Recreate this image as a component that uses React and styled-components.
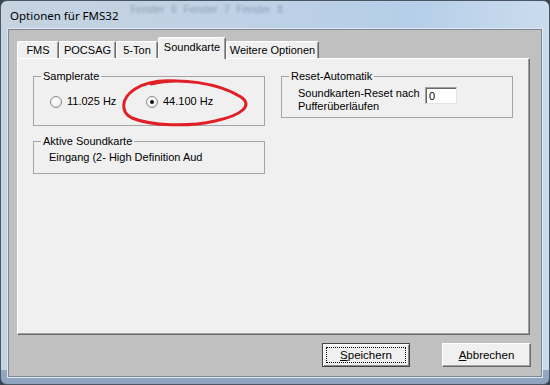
import React from 'react';
import styled, {createGlobalStyle} from 'styled-components';

const GlobalStyle = createGlobalStyle`
  html, body {
    margin: 0;
    padding: 0;
    background: #39434f;
  }
  body {
    font-family: 'Liberation Sans', Arial, sans-serif;
    font-size: 11px;
    color: #000;
  }
`;

const Window = styled.div`
  position: relative;
  width: 550px;
  height: 385px;
  box-sizing: border-box;
  border: 1px solid #4b5664;
  border-radius: 7px;
  padding: 0 7px 7px 7px;
  display: flex;
  flex-direction: column;
  background:
    linear-gradient(to bottom, rgba(0,0,0,0) 369px, #93a8c2 369px, #8ea4bf 100%),
    linear-gradient(to right, #c6d3e0 0%, #bed1e6 45%, #b6cee9 75%, #cadcee 100%);
  overflow: hidden;
`;

const TitleBar = styled.div`
  height: 28px;
  display: flex;
  align-items: center;
  padding-left: 2px;
  font-family: 'Noto Sans', 'Open Sans', sans-serif;
  font-size: 11.5px;
  color: #000;
`;

const GhostText = styled.span`
  margin-left: 12px;
  margin-bottom: 12px;
  font-family: 'Liberation Sans', sans-serif;
  font-size: 10px;
  color: rgba(80, 100, 125, 0.45);
  filter: blur(1px);
  word-spacing: 4px;
`;

const Client = styled.div`
  flex: 1;
  display: flex;
  flex-direction: column;
  background: #c0c0c0;
  border: 1px solid #7d8896;
  box-shadow: 0 0 0 1px #dfe6ee;
  padding: 7px 11px 9px 8px;
`;

const TabRow = styled.div`
  display: flex;
  align-items: flex-end;
  height: 21px;
  position: relative;
  z-index: 1;
`;

const Tab = styled.div`
  box-sizing: border-box;
  width: ${p => p.$w}px;
  height: ${p => (p.$active ? 22 : 17)}px;
  margin-bottom: ${p => (p.$active ? -1 : 0)}px;
  background: #f0f0f0;
  border-top: 1px solid #fff;
  border-left: 1px solid #fff;
  border-right: 1px solid #696969;
  box-shadow: inset -1px 0 0 #a0a0a0;
  border-radius: 2px 2px 0 0;
  display: flex;
  justify-content: center;
  padding-top: ${p => (p.$active ? 3 : 2)}px;
  line-height: 13px;
`;

const Panel = styled.div`
  flex: 1;
  box-sizing: border-box;
  background: #f0f0f0;
  border-top: 1px solid #fff;
  border-left: 1px solid #fff;
  border-right: 1px solid #696969;
  border-bottom: 1px solid #696969;
  box-shadow: inset -1px -1px 0 #a0a0a0;
  padding: 17px 0 0 15px;
  display: grid;
  grid-template-columns: 232px 232px;
  column-gap: 16px;
  align-content: start;
`;

const Column = styled.div`
  display: flex;
  flex-direction: column;
  gap: 15px;
`;

const GroupBox = styled.div`
  position: relative;
  box-sizing: border-box;
  height: ${p => p.$h}px;
  border: 1px solid #a5a5a5;
  padding: ${p => p.$pad};
  line-height: 13px;
`;

const Caption = styled.span`
  position: absolute;
  top: -7px;
  left: 7px;
  padding: 0 2px;
  background: #f0f0f0;
  line-height: 13px;
`;

const RadioRow = styled.div`
  display: flex;
`;

const RadioItem = styled.label`
  width: 96px;
  display: flex;
  align-items: center;
  gap: 5px;
`;

const RadioDot = styled.span`
  box-sizing: border-box;
  width: 12px;
  height: 12px;
  border-radius: 50%;
  border: 1px solid #8b8b8b;
  background: radial-gradient(circle at 40% 35%, #ffffff 0%, #f4f4f4 50%, #d6d6d6 100%);
  display: flex;
  align-items: center;
  justify-content: center;
  &::after {
    content: '';
    width: 4px;
    height: 4px;
    border-radius: 50%;
    background: ${p => (p.$checked ? '#111' : 'transparent')};
  }
`;

const ResetLine = styled.div`
  display: flex;
  align-items: flex-start;
`;

const ResetLabel = styled.div`
  width: 127px;
  white-space: nowrap;
`;

const NumberBox = styled.div`
  box-sizing: border-box;
  width: 32px;
  height: 17px;
  background: #fff;
  border-top: 1px solid #a0a0a0;
  border-left: 1px solid #a0a0a0;
  border-right: 1px solid #e3e3e3;
  border-bottom: 1px solid #e3e3e3;
  box-shadow: inset 1px 1px 0 #696969;
  padding: 2px 0 0 3px;
  line-height: 13px;
`;

const ButtonRow = styled.div`
  display: flex;
  justify-content: flex-end;
  gap: 32px;
  margin-top: 8px;
  margin-right: -1px;
`;

const Button = styled.div`
  box-sizing: border-box;
  width: ${p => p.$w}px;
  height: 24px;
  background: #f0f0f0;
  border: 1px solid;
  border-color: ${p => (p.$default ? '#444 #444 #444 #444' : '#fff #696969 #696969 #fff')};
  box-shadow: ${p => (p.$default
    ? 'inset 1px 1px 0 #fff, inset -1px -1px 0 #888'
    : 'inset -1px -1px 0 #a0a0a0')};
  display: flex;
  align-items: center;
  justify-content: center;
  padding: 3px;
  font-size: 11.5px;
`;

const FocusRing = styled.span`
  flex: 1;
  align-self: stretch;
  display: flex;
  align-items: center;
  justify-content: center;
  outline: 1px dotted #000;
  outline-offset: -1px;
`;

const Scribble = styled.svg`
  position: absolute;
  left: 115px;
  top: 74px;
  pointer-events: none;
`;

const tabs = [
    {label: 'FMS', w: 42},
    {label: 'POCSAG', w: 57},
    {label: '5-Ton', w: 42},
    {label: 'Soundkarte', w: 68, active: true},
    {label: 'Weitere Optionen', w: 93},
];

export default function App() {
    return (
        <>
            <GlobalStyle/>
            <Window>
                <TitleBar>
                    <span>{'Optionen für FMS32'}</span>
                    <GhostText>{'Fenster 6 Fenster 7 Fenster 8'}</GhostText>
                </TitleBar>
                <Client>
                    <TabRow>
                        {tabs.map(t => (
                            <Tab key={t.label} $w={t.w} $active={t.active}>{t.label}</Tab>
                        ))}
                    </TabRow>
                    <Panel>
                        <Column>
                            <GroupBox $h={50} $pad={'18px 0 0 16px'}>
                                <Caption>{'Samplerate'}</Caption>
                                <RadioRow>
                                    <RadioItem><RadioDot/>{'11.025 Hz'}</RadioItem>
                                    <RadioItem><RadioDot $checked/>{'44.100 Hz'}</RadioItem>
                                </RadioRow>
                            </GroupBox>
                            <GroupBox $h={33} $pad={'9px 0 0 15px'}>
                                <Caption>{'Aktive Soundkarte'}</Caption>
                                {'Eingang (2- High Definition Aud'}
                            </GroupBox>
                        </Column>
                        <Column>
                            <GroupBox $h={42} $pad={'10px 0 0 16px'}>
                                <Caption>{'Reset-Automatik'}</Caption>
                                <ResetLine>
                                    <ResetLabel>{'Soundkarten-Reset nach'}<br/>{'Pufferüberläufen'}</ResetLabel>
                                    <NumberBox>{'0'}</NumberBox>
                                </ResetLine>
                            </GroupBox>
                        </Column>
                    </Panel>
                    <ButtonRow>
                        <Button $w={88} $default>
                            <FocusRing><span><u>{'S'}</u>{'peichern'}</span></FocusRing>
                        </Button>
                        <Button $w={89}>
                            <span><u>{'A'}</u>{'bbrechen'}</span>
                        </Button>
                    </ButtonRow>
                </Client>
                <Scribble width="140" height="56" viewBox="115 74 140 56">
                    <path
                        d="M 150 83 C 178 76, 218 82, 240 96 C 252 104, 242 114, 214 120 C 188 126, 150 125, 131 117 C 119 111, 120 97, 134 88 C 145 81, 160 79, 174 80"
                        fill="none"
                        stroke="#e01f26"
                        strokeWidth="3"
                        strokeLinecap="round"
                    />
                </Scribble>
            </Window>
        </>
    );
}
